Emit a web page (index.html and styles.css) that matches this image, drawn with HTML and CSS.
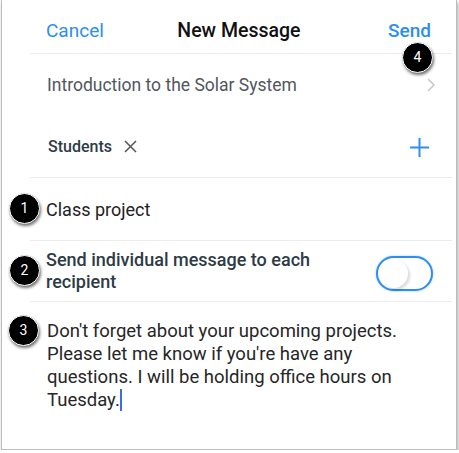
FILE: index.html
```html
<!DOCTYPE html>
<html lang="en">
<head>
    <meta charset="UTF-8">
    <meta name="viewport" content="width=device-width, initial-scale=1.0">
    <title>New Message</title>
    <link rel="stylesheet" href="styles.css">
</head>
<body>

    <div class="frame">
        <div class="header row">
            <span class="nav-button">Cancel</span>
            <span class="title">New Message</span>
            <span class="nav-button send">Send</span>
            <span class="badge badge-send">4</span>
        </div>

        <div class="course">
            <span>Introduction to the Solar System</span>
            <svg class="chevron" width="10" height="16" viewBox="0 0 10 16">
                <path d="M2 2 L8 8 L2 14" fill="none" stroke="#c7c7cc" stroke-width="1.5"/>
            </svg>
        </div>

        <div class="recipients row">
            <span class="chip">Students
                <svg width="13" height="13" viewBox="0 0 13 13">
                    <path d="M1 1 L12 12 M12 1 L1 12" stroke="#555" stroke-width="1.5"/>
                </svg>
            </span>
            <svg class="plus" width="21" height="21" viewBox="0 0 21 21">
                <path d="M10.5 1 V20 M1 10.5 H20" stroke="#2c8ff0" stroke-width="2"/>
            </svg>
        </div>

        <div class="subject row">
            <span class="badge">1</span>
            Class project
        </div>

        <div class="toggle-row row">
            <span class="badge">2</span>
            <span class="toggle-label">Send individual message to each recipient</span>
            <span class="toggle"><span class="knob"></span></span>
        </div>

        <div class="body-text">
            <span class="badge">3</span>
            Don't forget about your upcoming projects. Please let me know if you're have any questions. I will be holding office hours on Tuesday.<span class="cursor"></span>
        </div>
    </div>

</body>
</html>
```

FILE: styles.css
```css
body {
    margin: 0;
    background: #fff;
    font-family: 'Roboto', 'Liberation Sans', sans-serif;
}

.frame {
    margin-left: 1px;
    width: 454px;
    height: 449px;
    border: 1px solid #bdbdbd;
    border-top: none;
    box-shadow: 1px 2px 3px rgba(0, 0, 0, 0.35);
    background: #fff;
    overflow: hidden;
}

.row {
    position: relative;
    margin: 0 4px 0 28px;
    padding-left: 16px;
    border-bottom: 1px solid #ececec;
    display: flex;
    align-items: center;
}

.header {
    height: 45px;
    padding-top: 8px;
    padding-right: 21px;
    justify-content: space-between;
    font-size: 19px;
}

.nav-button {
    color: #2c8ff0;
}

.send {
    font-weight: 500;
}

.title {
    font-size: 19.5px;
    font-weight: 500;
    color: #111;
    margin-left: -14px;
}

.course {
    height: 62px;
    padding: 0 20px 0 45px;
    display: flex;
    align-items: center;
    justify-content: space-between;
    font-size: 17.5px;
    color: #50575d;
}

.recipients {
    height: 61px;
    padding-right: 22px;
    justify-content: space-between;
}

.chip {
    display: flex;
    align-items: center;
    gap: 12px;
    margin-left: 2px;
    font-size: 16px;
    font-weight: 500;
    color: #2d3b45;
}

.plus {
    margin-top: 2px;
}

.subject {
    height: 61px;
    font-size: 18px;
    color: #222;
    padding-top: 1px;
}

.toggle-row {
    height: 60px;
    padding-right: 19px;
    justify-content: space-between;
}

.toggle-label {
    width: 300px;
    font-size: 18px;
    font-weight: 500;
    line-height: 22px;
    color: #2d3b45;
}

.toggle {
    position: relative;
    width: 53px;
    height: 31px;
    border: 2px solid #2c8ff0;
    border-radius: 18px;
    background: #fff;
    box-shadow: 0 0 2px rgba(44, 143, 240, 0.5);
    margin-top: 4px;
}

.knob {
    position: absolute;
    left: 1px;
    top: 1px;
    width: 29px;
    height: 29px;
    border-radius: 50%;
    background: #fff;
    box-shadow: 2px 2px 3px rgba(0, 0, 0, 0.15);
}

.body-text {
    position: relative;
    padding: 18px 50px 0 45px;
    font-size: 18.5px;
    line-height: 23px;
    color: #262626;
}

.cursor {
    display: inline-block;
    width: 2px;
    height: 22px;
    background: #3d6cf0;
    vertical-align: -5px;
}

.badge {
    position: absolute;
    left: -21px;
    top: 50%;
    margin-top: -16px;
    width: 29px;
    height: 29px;
    border-radius: 50%;
    background: #000;
    border: 1px solid #fff;
    color: #fff;
    font-size: 14px;
    font-weight: 400;
    line-height: 29px;
    text-align: center;
    box-shadow: 1px 2px 3px rgba(0, 0, 0, 0.55);
}

.body-text .badge {
    left: 6px;
    top: 13px;
    margin-top: 0;
}

.badge-send {
    left: auto;
    right: 19px;
    top: 58px;
}
```
